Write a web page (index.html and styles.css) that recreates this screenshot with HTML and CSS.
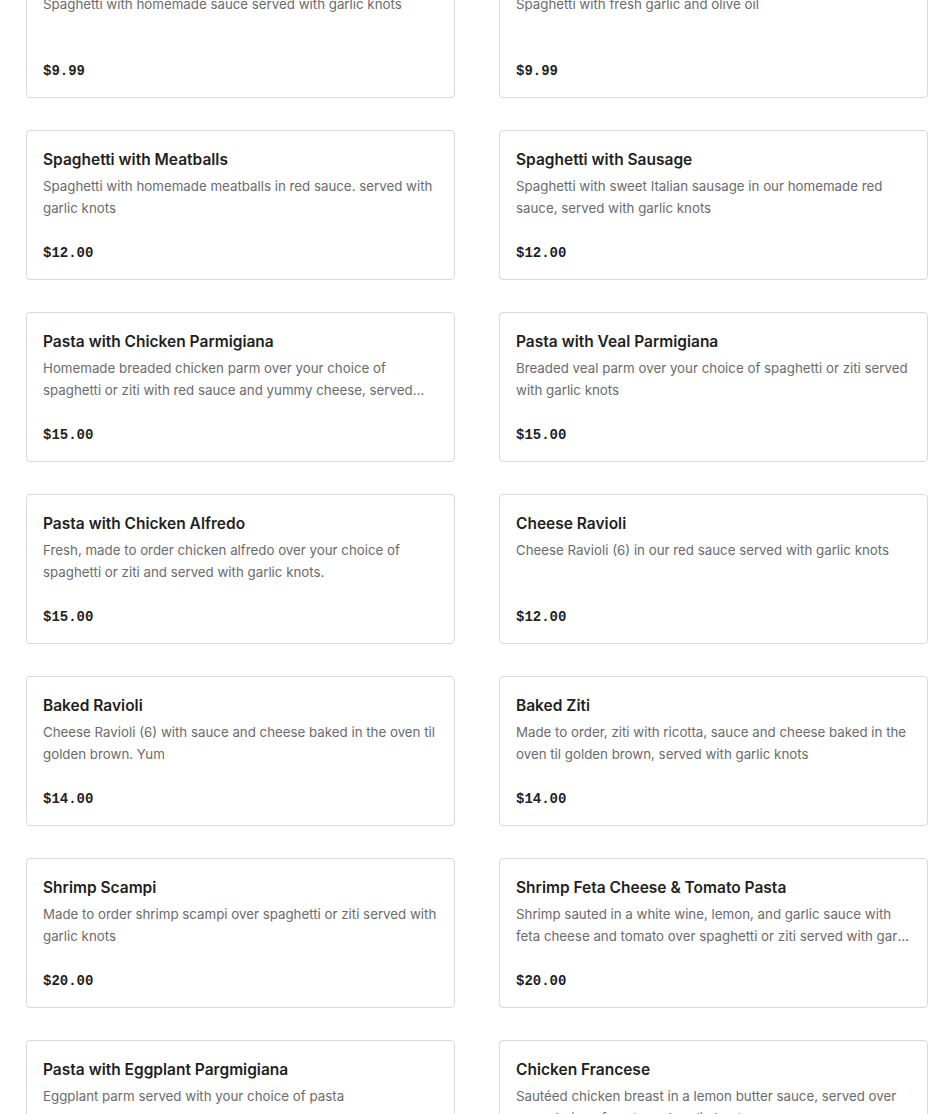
FILE: index.html
```html
<!DOCTYPE html>
<html>
<head>
<meta charset="utf-8">
<link rel="stylesheet" href="styles.css">
</head>
<body>
<div class="menu">
  <div class="card"><h3 class="title">Spaghetti with Marinara</h3><p class="desc">Spaghetti with homemade sauce served with garlic knots</p><div class="price">$9.99</div></div>
  <div class="card"><h3 class="title">Spaghetti Aglio e Olio</h3><p class="desc">Spaghetti with fresh garlic and olive oil</p><div class="price">$9.99</div></div>
  <div class="card"><h3 class="title">Spaghetti with Meatballs</h3><p class="desc">Spaghetti with homemade meatballs in red sauce. served with garlic knots</p><div class="price">$12.00</div></div>
  <div class="card"><h3 class="title">Spaghetti with Sausage</h3><p class="desc">Spaghetti with sweet Italian sausage in our homemade red sauce, served with garlic knots</p><div class="price">$12.00</div></div>
  <div class="card"><h3 class="title">Pasta with Chicken Parmigiana</h3><p class="desc">Homemade breaded chicken parm over your choice of spaghetti or ziti with red sauce and yummy cheese, served with garlic knots</p><div class="price">$15.00</div></div>
  <div class="card"><h3 class="title">Pasta with Veal Parmigiana</h3><p class="desc">Breaded veal parm over your choice of spaghetti or ziti served with garlic knots</p><div class="price">$15.00</div></div>
  <div class="card"><h3 class="title">Pasta with Chicken Alfredo</h3><p class="desc">Fresh, made to order chicken alfredo over your choice of spaghetti or ziti and served with garlic knots.</p><div class="price">$15.00</div></div>
  <div class="card"><h3 class="title">Cheese Ravioli</h3><p class="desc">Cheese Ravioli (6) in our red sauce served with garlic knots</p><div class="price">$12.00</div></div>
  <div class="card"><h3 class="title">Baked Ravioli</h3><p class="desc">Cheese Ravioli (6) with sauce and cheese baked in the oven til golden brown. Yum</p><div class="price">$14.00</div></div>
  <div class="card"><h3 class="title">Baked Ziti</h3><p class="desc">Made to order, ziti with ricotta, sauce and cheese baked in the oven til golden brown, served with garlic knots</p><div class="price">$14.00</div></div>
  <div class="card"><h3 class="title">Shrimp Scampi</h3><p class="desc">Made to order shrimp scampi over spaghetti or ziti served with garlic knots</p><div class="price">$20.00</div></div>
  <div class="card"><h3 class="title">Shrimp Feta Cheese &amp; Tomato Pasta</h3><p class="desc">Shrimp sauted in a white wine, lemon, and garlic sauce with feta cheese and tomato over spaghetti or ziti served with garlic knots</p><div class="price">$20.00</div></div>
  <div class="card"><h3 class="title">Pasta with Eggplant Pargmigiana</h3><p class="desc">Eggplant parm served with your choice of pasta</p><div class="price">$15.00</div></div>
  <div class="card"><h3 class="title">Chicken Francese</h3><p class="desc">Sautéed chicken breast in a lemon butter sauce, served over your choice of pasta and garlic knots</p><div class="price">$16.00</div></div>
</div>
</body>
</html>
```
FILE: styles.css
```css
html, body {
  margin: 0;
  padding: 0;
  background: #ffffff;
}
body {
  font-family: Inter, "Noto Sans", "Liberation Sans", sans-serif;
  color: #1f1f1f;
  overflow: hidden;
}
.menu {
  display: grid;
  grid-template-columns: 429px 429px;
  column-gap: 44px;
  row-gap: 32px;
  margin-top: -52px;
  padding-left: 26px;
}
.card {
  border: 1px solid #d9d9d9;
  border-radius: 4px;
  padding: 17px 15px 14px 16px;
  height: 150px;
  box-sizing: border-box;
  display: flex;
  flex-direction: column;
}
.title {
  margin: 0 0 3px 0;
  font-size: 15.5px;
  line-height: 24px;
  font-weight: 600;
  color: #1f1f1f;
  white-space: nowrap;
  overflow: hidden;
  text-overflow: ellipsis;
}
.desc {
  margin: 0;
  font-size: 13.3px;
  line-height: 22px;
  color: #6b6b6b;
  height: 44px;
  display: -webkit-box;
  -webkit-line-clamp: 2;
  -webkit-box-orient: vertical;
  overflow: hidden;
}
.price {
  margin-top: 23px;
  font-family: "Liberation Mono", "DejaVu Sans Mono", monospace;
  font-weight: 700;
  font-size: 14px;
  line-height: 22px;
  color: #1f1f1f;
}
```
